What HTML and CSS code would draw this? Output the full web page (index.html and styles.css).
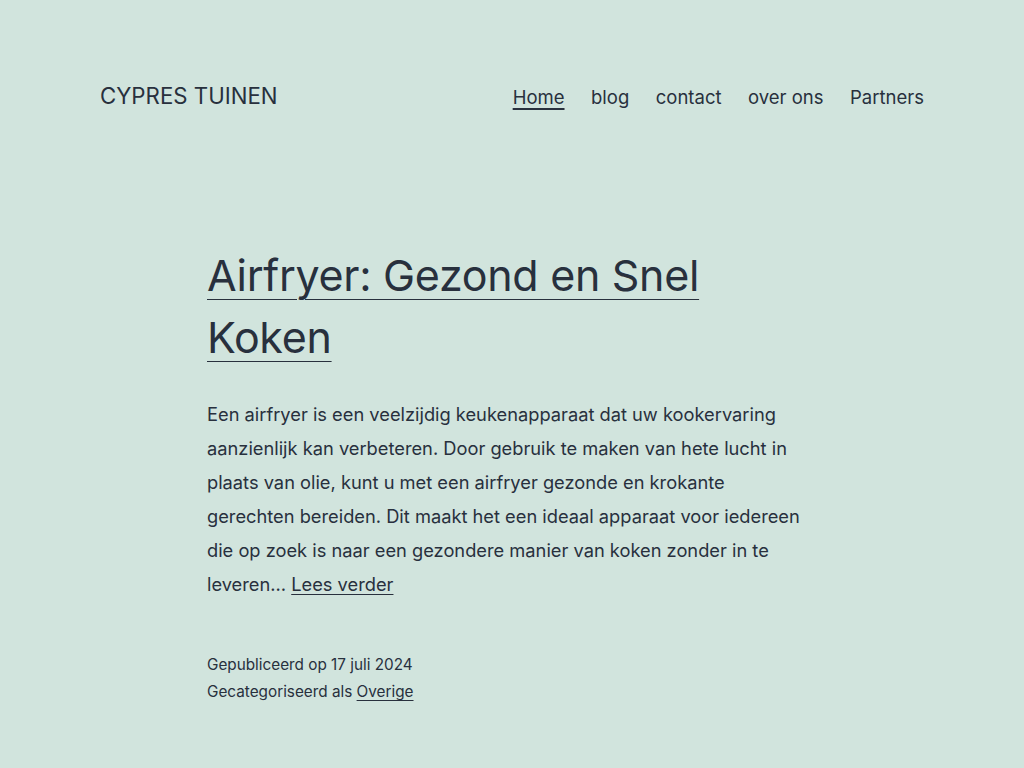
FILE: index.html
```html
<!DOCTYPE html>
<html lang="nl">
<head>
<meta charset="utf-8">
<title>CYPRES TUINEN</title>
<link rel="stylesheet" href="styles.css">
</head>
<body>
<header class="site-header">
  <p class="site-title">CYPRES TUINEN</p>
  <nav class="primary-nav">
    <a class="nav-link current" href="#">Home</a>
    <a class="nav-link" href="#">blog</a>
    <a class="nav-link" href="#">contact</a>
    <a class="nav-link" href="#">over ons</a>
    <a class="nav-link" href="#">Partners</a>
  </nav>
</header>
<main class="site-main">
  <article class="post">
    <h2 class="entry-title"><a href="#">Airfryer: Gezond en Snel Koken</a></h2>
    <p class="entry-summary">Een airfryer is een veelzijdig keukenapparaat dat uw kookervaring aanzienlijk kan verbeteren. Door gebruik te maken van hete lucht in plaats van olie, kunt u met een airfryer gezonde en krokante gerechten bereiden. Dit maakt het een ideaal apparaat voor iedereen die op zoek is naar een gezondere manier van koken zonder in te leveren… <a href="#">Lees verder</a></p>
    <footer class="entry-meta">
      <p>Gepubliceerd op 17 juli 2024</p>
      <p>Gecategoriseerd als <a href="#">Overige</a></p>
    </footer>
  </article>
</main>
</body>
</html>
```
FILE: styles.css
```css
html, body {
  margin: 0;
  padding: 0;
}
body {
  background: #d1e4dd;
  color: #28303d;
  font-family: Inter, "Noto Sans", sans-serif;
}
a {
  color: #28303d;
  text-decoration: underline;
  text-decoration-thickness: 1px;
  text-underline-offset: 3px;
}
.site-header {
  display: flex;
  justify-content: space-between;
  align-items: center;
  padding: 80px 100px 0;
  height: 32px;
}
.site-title {
  margin: 0;
  font-size: 22.25px;
  line-height: 32px;
}
.primary-nav {
  display: flex;
  gap: 26.5px;
  font-size: 18.5px;
  line-height: 32px;
  padding-top: 2px;
}
.nav-link {
  text-decoration: none;
}
.nav-link.current {
  text-decoration: underline;
  text-decoration-thickness: 2px;
  text-underline-offset: 4px;
}
.site-main {
  padding: 0 207px;
}
.post {
  width: 610px;
}
.entry-title {
  margin: 132px 0 0;
  font-size: 43px;
  font-weight: 400;
  line-height: 62.4px;
  letter-spacing: -0.3px;
}
.entry-title a {
  text-underline-offset: 8px;
}
.entry-summary {
  margin: 28px 0 0;
  font-size: 18.27px;
  line-height: 34px;
}
.entry-meta {
  margin-top: 50px;
  font-size: 15.3px;
  line-height: 27px;
}
.entry-meta p {
  margin: 0;
}
.entry-meta a {
  text-underline-offset: 3px;
}
```
